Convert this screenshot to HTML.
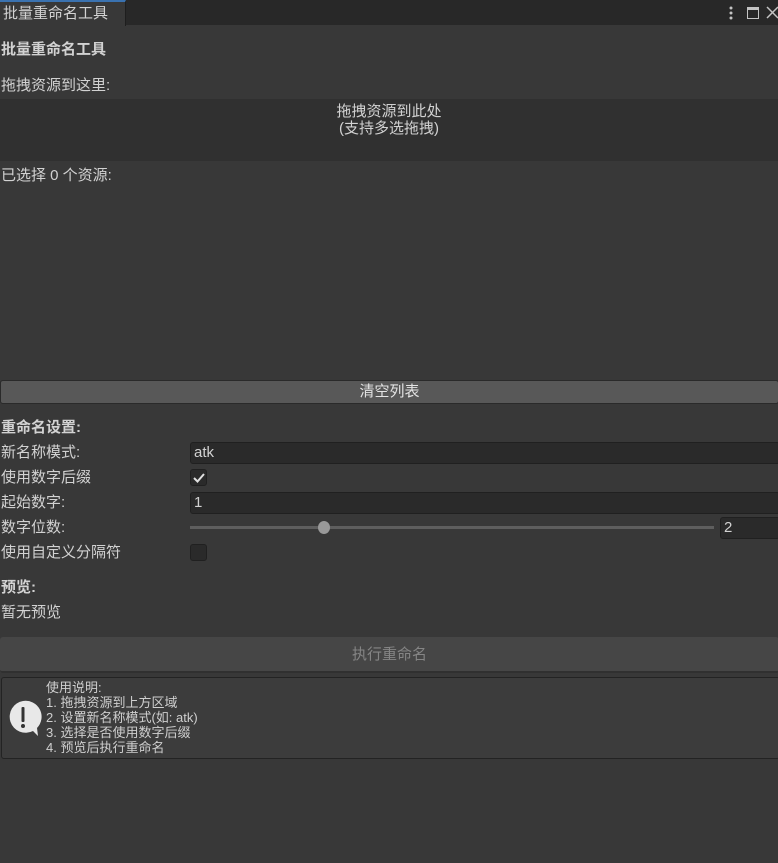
<!DOCTYPE html>
<html><head><meta charset="utf-8"><style>
*{margin:0;padding:0;box-sizing:border-box}
body{width:778px;height:863px;background:#383838;overflow:hidden;position:relative;font-family:"Liberation Sans","Noto Sans CJK SC",sans-serif;font-size:15px;color:#d2d2d2}
.a{position:absolute;white-space:nowrap;line-height:18px}
.b{font-weight:bold}
.fld{position:absolute;background:#2a2a2a;border:1px solid #202020;border-radius:3px;padding-left:3px;line-height:19px}
.cb{position:absolute;width:17px;height:17px;background:#2a2a2a;border:1px solid #202020;border-radius:3px}
</style></head><body>
<div style="position:absolute;left:0;top:0;width:778px;height:25px;background:#282828"></div>
<div style="position:absolute;left:0;top:0;width:126px;height:26px;background:#383838;border-top:2px solid #3a72b0;border-right:1px solid #1e1e1e"></div>
<div class="a" style="left:3px;top:5px">批量重命名工具</div>
<svg style="position:absolute;left:726px;top:5px" width="52" height="16"><circle cx="5" cy="3" r="1.5" fill="#c4c4c4"/><circle cx="5" cy="8" r="1.5" fill="#c4c4c4"/><circle cx="5" cy="13" r="1.5" fill="#c4c4c4"/><rect x="21.5" y="2.5" width="11" height="11" fill="none" stroke="#c4c4c4"/><rect x="21" y="2" width="12" height="3" fill="#c4c4c4"/><path d="M41 2L52 13M52 2L41 13" stroke="#c4c4c4" stroke-width="1.5"/></svg>

<div class="a b" style="left:1px;top:41px">批量重命名工具</div>
<div class="a" style="left:1px;top:77px">拖拽资源到这里:</div>
<div style="position:absolute;left:0;top:99px;width:778px;height:62px;background:#303030"></div>
<div class="a" style="left:0;width:778px;text-align:center;top:103px">拖拽资源到此处</div>
<div class="a" style="left:0;width:778px;text-align:center;top:120px">(支持多选拖拽)</div>
<div class="a" style="left:1px;top:167px">已选择 0 个资源:</div>

<div style="position:absolute;left:0;top:380px;width:779px;height:24px;background:#585858;border:1px solid #2a2a2a;border-radius:3px;text-align:center;line-height:22px;color:#e4e4e4">清空列表</div>

<div class="a b" style="left:1px;top:419px">重命名设置:</div>
<div class="a" style="left:1px;top:444px">新名称模式:</div>
<div class="fld" style="left:190px;top:442px;width:590px;height:22px">atk</div>
<div class="a" style="left:1px;top:469px">使用数字后缀</div>
<div class="cb" style="left:190px;top:469px"></div>
<svg style="position:absolute;left:192px;top:471px" width="14" height="14"><path d="M2 7L5.5 10.5L12 3" stroke="#e0e0e0" stroke-width="2" fill="none"/></svg>
<div class="a" style="left:1px;top:494px">起始数字:</div>
<div class="fld" style="left:190px;top:492px;width:590px;height:22px">1</div>
<div class="a" style="left:1px;top:519px">数字位数:</div>
<div style="position:absolute;left:190px;top:526px;width:524px;height:3px;background:#5e5e5e"></div>
<div style="position:absolute;left:318px;top:521px;width:12px;height:13px;border-radius:50%;background:#999"></div>
<div class="fld" style="left:720px;top:517px;width:60px;height:22px">2</div>
<div class="a" style="left:1px;top:544px">使用自定义分隔符</div>
<div class="cb" style="left:190px;top:544px"></div>

<div class="a b" style="left:1px;top:579px">预览:</div>
<div class="a" style="left:1px;top:604px">暂无预览</div>

<div style="position:absolute;left:0;top:637px;width:779px;height:36px;background:#464646;border-bottom:2px solid #303030;border-radius:3px;text-align:center;line-height:36px;color:#858585">执行重命名</div>

<div style="position:absolute;left:1px;top:677px;width:779px;height:82px;background:#3c3c3c;border:1px solid #232323;border-radius:3px"></div>
<svg style="position:absolute;left:6px;top:700px" width="36" height="38"><path d="M17 1A16 16 0 1 0 27 31L32 36L31 28A16 16 0 0 0 17 1Z" fill="#e8e8e8"/><rect x="15.5" y="7" width="3" height="15" rx="1" fill="#333"/><circle cx="17" cy="26" r="2" fill="#333"/></svg>
<div style="position:absolute;left:46px;top:680px;font-size:13px;line-height:15px;color:#cfcfcf;white-space:nowrap">使用说明:<br>1. 拖拽资源到上方区域<br>2. 设置新名称模式(如: atk)<br>3. 选择是否使用数字后缀<br>4. 预览后执行重命名</div>
</body></html>
